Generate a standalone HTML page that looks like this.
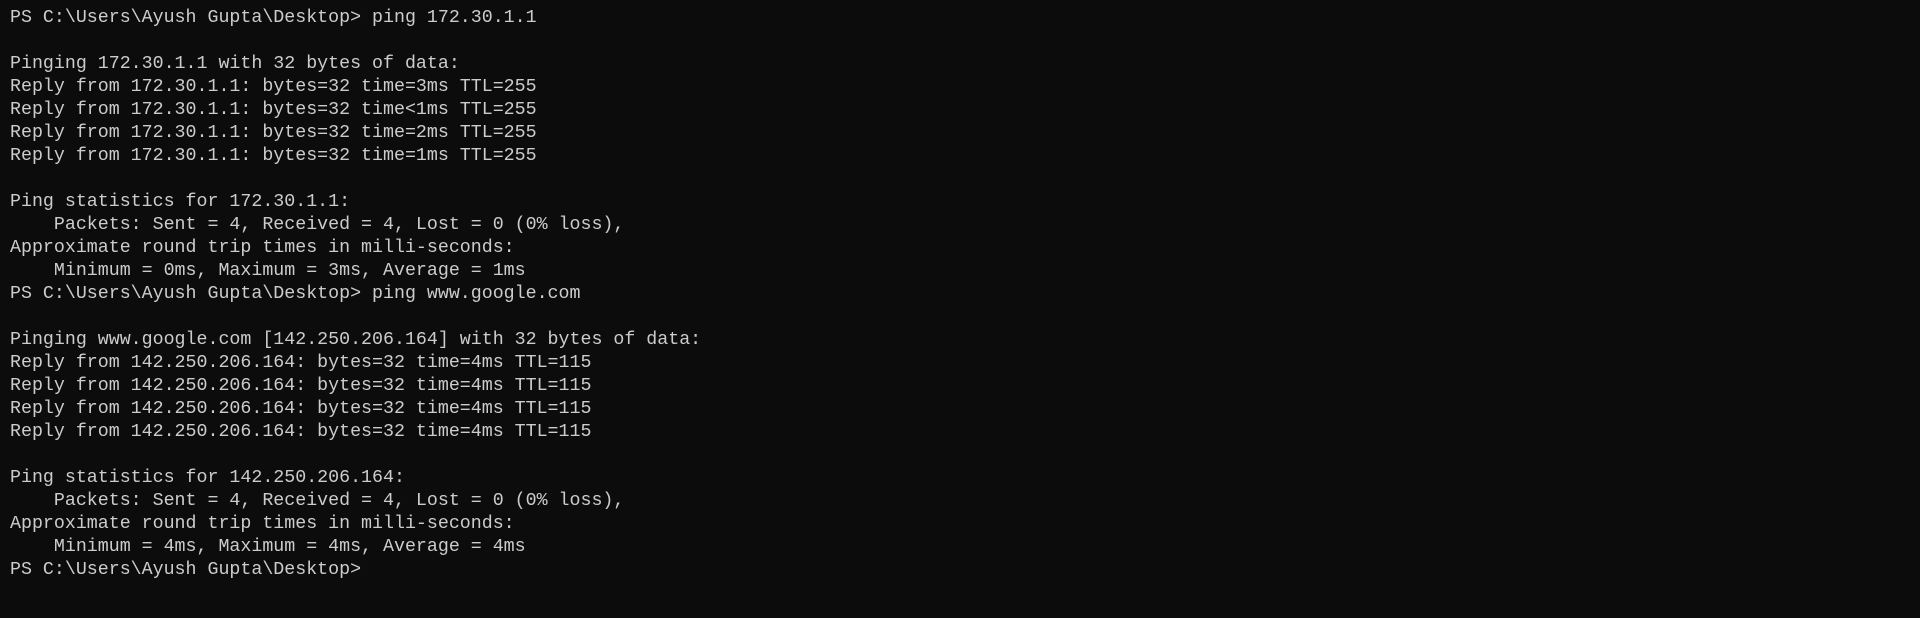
<!DOCTYPE html>
<html><head><style>
html,body{margin:0;padding:0;background:#0c0c0c;width:1920px;height:618px;overflow:hidden}
pre{margin:0;position:absolute;left:10px;top:7px;font-family:"Liberation Mono",monospace;font-size:18.3px;line-height:23px;color:#cccccc}
</style></head><body><pre>PS C:\Users\Ayush Gupta\Desktop&gt; ping 172.30.1.1

Pinging 172.30.1.1 with 32 bytes of data:
Reply from 172.30.1.1: bytes=32 time=3ms TTL=255
Reply from 172.30.1.1: bytes=32 time&lt;1ms TTL=255
Reply from 172.30.1.1: bytes=32 time=2ms TTL=255
Reply from 172.30.1.1: bytes=32 time=1ms TTL=255

Ping statistics for 172.30.1.1:
    Packets: Sent = 4, Received = 4, Lost = 0 (0% loss),
Approximate round trip times in milli-seconds:
    Minimum = 0ms, Maximum = 3ms, Average = 1ms
PS C:\Users\Ayush Gupta\Desktop&gt; ping www.google.com

Pinging www.google.com [142.250.206.164] with 32 bytes of data:
Reply from 142.250.206.164: bytes=32 time=4ms TTL=115
Reply from 142.250.206.164: bytes=32 time=4ms TTL=115
Reply from 142.250.206.164: bytes=32 time=4ms TTL=115
Reply from 142.250.206.164: bytes=32 time=4ms TTL=115

Ping statistics for 142.250.206.164:
    Packets: Sent = 4, Received = 4, Lost = 0 (0% loss),
Approximate round trip times in milli-seconds:
    Minimum = 4ms, Maximum = 4ms, Average = 4ms
PS C:\Users\Ayush Gupta\Desktop&gt;</pre></body></html>
